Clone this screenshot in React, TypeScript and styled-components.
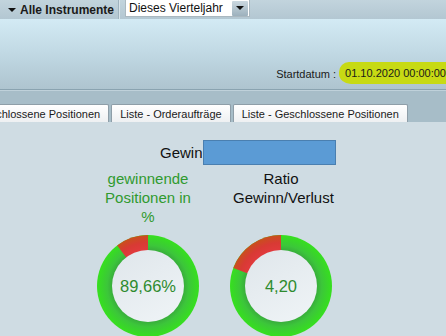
import React from "react";
import styled, { createGlobalStyle } from "styled-components";

const Global = createGlobalStyle`
  html, body { margin: 0; padding: 0; }
  body { font-family: "Liberation Sans", Arial, sans-serif; background: #cfdce3; }
`;

const Page = styled.div`
  width: 446px;
  height: 336px;
  overflow: hidden;
  display: flex;
  flex-direction: column;
  background: #cfdce3;
`;

const Toolbar = styled.div`
  height: 19px;
  flex: none;
  display: flex;
  align-items: flex-start;
  background: linear-gradient(#c2d4dd, #b3c7d2);
`;

const MenuLabel = styled.div`
  display: flex;
  align-items: center;
  gap: 4px;
  height: 19px;
  width: 119px;
  box-sizing: border-box;
  padding-left: 8px;
  font-size: 12px;
  font-weight: bold;
  color: #1a1a1a;
  white-space: nowrap;
  border-right: 1px solid #9fb3be;
  box-shadow: 1px 0 0 #d8e4ea;
  margin-right: 6px;
`;

const Caret = styled.span<{ $size?: number }>`
  width: 0;
  height: 0;
  border-left: ${(p) => p.$size ?? 4}px solid transparent;
  border-right: ${(p) => p.$size ?? 4}px solid transparent;
  border-top: ${(p) => p.$size ?? 4}px solid #111;
  display: inline-block;
`;

const Select = styled.div`
  width: 125px;
  height: 17px;
  box-sizing: border-box;
  background: #fff;
  border: 1px solid #aab8c0;
  border-top: none;
  display: flex;
  align-items: center;
  justify-content: space-between;
  padding-left: 3px;
  font-size: 12px;
  color: #111;
  white-space: nowrap;
`;

const SelectButton = styled.div`
  width: 16px;
  height: 15px;
  margin-right: 1px;
  display: flex;
  align-items: center;
  justify-content: center;
  background: linear-gradient(#cbd8e0, #9db1bd);
  border-radius: 1px;
`;

const Header = styled.div`
  height: 71px;
  flex: none;
  box-sizing: border-box;
  display: flex;
  justify-content: flex-end;
  align-items: flex-end;
  padding-bottom: 5px;
  background: linear-gradient(#d3eaf4, #c2dae5 45%, #aec4cf);
  border-bottom: 1px solid #8aa3b0;
  font-size: 11px;
  color: #1a1a1a;
  overflow: hidden;
`;

const StartLabel = styled.span`
  margin-right: 3px;
  padding-bottom: 4px;
`;

const Highlight = styled.span`
  background: #c7da14;
  padding: 5px 14px 5px 6px;
  border-radius: 10px 0 0 12px / 10px 0 0 10px;
  color: #1a1a1a;
  white-space: nowrap;
  margin-right: -14px;
`;

const TabStrip = styled.div`
  height: 32px;
  flex: none;
  box-sizing: border-box;
  display: flex;
  align-items: flex-end;
  gap: 2px;
  background: #a7bdc8;
  border-top: 1px solid #bfd1da;
`;

const Tab = styled.div<{ $first?: boolean }>`
  height: 18px;
  box-sizing: border-box;
  padding: 0 8px;
  display: flex;
  align-items: center;
  font-size: 11px;
  color: #1a1a1a;
  white-space: nowrap;
  background: linear-gradient(#ffffff, #eef0f2);
  border: 1px solid #8e9ea8;
  border-bottom: none;
  border-radius: 2px 2px 0 0;
  margin-left: ${(p) => (p.$first ? "-33px" : "0")};
`;

const Content = styled.div`
  flex: 1;
  padding-top: 18px;
  display: flex;
  flex-direction: column;
`;

const TitleRow = styled.div`
  display: flex;
  align-items: center;
  margin-left: 160px;
  font-size: 15px;
  color: #111;
`;

const Redact = styled.div`
  width: 133px;
  height: 25px;
  box-sizing: border-box;
  background: #5b9bd5;
  border: 1px solid #4a7fb0;
`;

const Columns = styled.div`
  display: grid;
  grid-template-columns: 120px 120px;
  column-gap: 13px;
  margin-left: 88px;
  margin-top: 4px;
`;

const Column = styled.div`
  display: flex;
  flex-direction: column;
  align-items: center;
`;

const Caption = styled.div<{ $color: string }>`
  width: 96px;
  height: 57px;
  text-align: center;
  font-size: 15px;
  line-height: 19px;
  color: ${(p) => p.$color};
`;

const DonutBox = styled.div`
  margin-top: 9px;
  display: grid;
  width: 102px;
  height: 102px;
  & > * {
    grid-area: 1 / 1;
  }
`;

const DonutValue = styled.div`
  display: flex;
  align-items: center;
  justify-content: center;
  font-size: 16.5px;
  color: #2e8b2e;
`;

function Donut({ frac, label, id }: { frac: number; label: string; id: string }) {
  const R = 51;
  const c = 51;
  const th = frac * 2 * Math.PI;
  const x = c - R * Math.sin(th);
  const y = c - R * Math.cos(th);
  const large = frac > 0.5 ? 1 : 0;
  return (
    <DonutBox>
      <svg width="102" height="102" viewBox="0 0 102 102">
        <defs>
          <radialGradient id={`g${id}`} cx="51" cy="51" r="51" gradientUnits="userSpaceOnUse">
            <stop offset="0.68" stopColor="#38a83c" />
            <stop offset="0.8" stopColor="#3cc63a" />
            <stop offset="1" stopColor="#36e01e" />
          </radialGradient>
          <radialGradient id={`r${id}`} cx="51" cy="51" r="51" gradientUnits="userSpaceOnUse">
            <stop offset="0.68" stopColor="#e23a3e" />
            <stop offset="0.85" stopColor="#d83a34" />
            <stop offset="1" stopColor="#c8501c" />
          </radialGradient>
          <linearGradient id={`i${id}`} x1="0" y1="0" x2="0.6" y2="1">
            <stop offset="0" stopColor="#dfe6eb" />
            <stop offset="1" stopColor="#edf2f5" />
          </linearGradient>
        </defs>
        <circle cx={c} cy={c} r={R} fill={`url(#g${id})`} />
        <path d={`M${c},${c} L${c},0 A${R},${R} 0 ${large} 0 ${x.toFixed(2)},${y.toFixed(2)} Z`} fill={`url(#r${id})`} />
        <circle cx={c} cy={c} r="36" fill={`url(#i${id})`} />
      </svg>
      <DonutValue>{label}</DonutValue>
    </DonutBox>
  );
}

export default function App() {
  return (
    <Page>
      <Global />
      <Toolbar>
        <MenuLabel>
          <Caret />
          Alle Instrumente
        </MenuLabel>
        <Select>
          Dieses Vierteljahr
          <SelectButton>
            <Caret $size={4} />
          </SelectButton>
        </Select>
      </Toolbar>
      <Header>
        <StartLabel>Startdatum :</StartLabel>
        <Highlight>01.10.2020 00:00:00</Highlight>
      </Header>
      <TabStrip>
        <Tab $first>Geschlossene Positionen</Tab>
        <Tab>Liste - Orderaufträge</Tab>
        <Tab>Liste - Geschlossene Positionen</Tab>
      </TabStrip>
      <Content>
        <TitleRow>
          Gewin
          <Redact />
        </TitleRow>
        <Columns>
          <Column>
            <Caption $color="#2f9a2f">gewinnende Positionen in %</Caption>
            <Donut id="a" frac={0.1034} label="89,66%" />
          </Column>
          <Column>
            <Caption $color="#111">Ratio Gewinn/Verlust</Caption>
            <Donut id="b" frac={1 / 5.2} label="4,20" />
          </Column>
        </Columns>
      </Content>
    </Page>
  );
}
